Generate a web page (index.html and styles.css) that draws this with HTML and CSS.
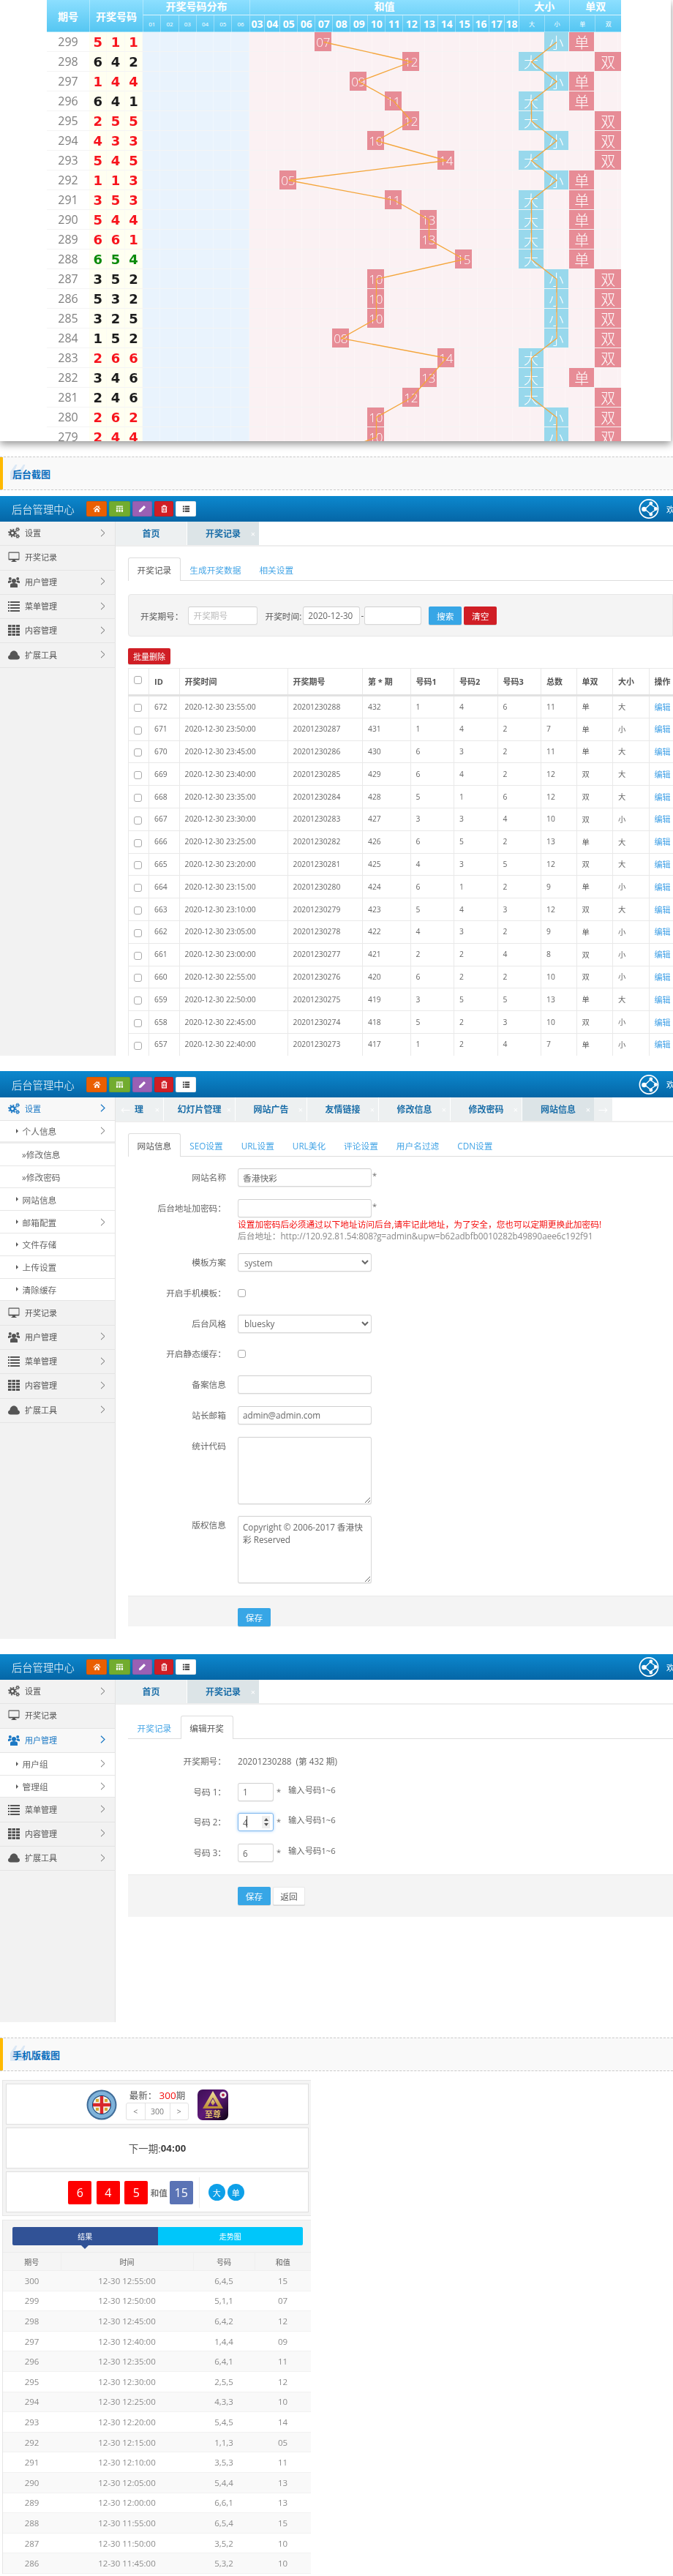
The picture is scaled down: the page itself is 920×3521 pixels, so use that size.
FILE: index.html
```html
<!DOCTYPE html>
<html lang="zh-CN">
<head>
<meta charset="utf-8">
<title>截图</title>
<link rel="stylesheet" href="styles.css">
</head>
<body>
<svg class="sprite" aria-hidden="true">
  <symbol id="i-quote" viewBox="0 0 21 21"><path fill="#dbe8f5" d="M7 0h2.500L5.500 10H9v11H0V10zM18 0h2.500l-4 10H20v11h-9V10z"/></symbol>
  <symbol id="i-gear" viewBox="0 0 16 16"><g fill="none" stroke="#555"><circle cx="6" cy="8.6" r="3" stroke-width="2.4"/><circle cx="6" cy="8.6" r="5" stroke-width="1.8" stroke-dasharray="1.9 2"/><circle cx="13" cy="3.6" r="1.5" stroke-width="1.3"/><circle cx="13" cy="3.6" r="2.5" stroke-width="1" stroke-dasharray="1.2 1.2"/><circle cx="13" cy="13" r="1.5" stroke-width="1.3"/><circle cx="13" cy="13" r="2.5" stroke-width="1" stroke-dasharray="1.2 1.2"/></g></symbol>
  <symbol id="i-gear-b" viewBox="0 0 16 16"><g fill="none" stroke="#1b78c4"><circle cx="6" cy="8.6" r="3" stroke-width="2.4"/><circle cx="6" cy="8.6" r="5" stroke-width="1.8" stroke-dasharray="1.9 2"/><circle cx="13" cy="3.6" r="1.5" stroke-width="1.3"/><circle cx="13" cy="3.6" r="2.5" stroke-width="1" stroke-dasharray="1.2 1.2"/><circle cx="13" cy="13" r="1.5" stroke-width="1.3"/><circle cx="13" cy="13" r="2.5" stroke-width="1" stroke-dasharray="1.2 1.2"/></g></symbol>
  <symbol id="i-monitor" viewBox="0 0 16 16"><path fill="#555" d="M1.5 1.5h13a1 1 0 0 1 1 1v9a1 1 0 0 1-1 1H10v1.5h1.5v1h-7v-1H6V12.500H1.500a1 1 0 0 1-1-1v-9a1 1 0 0 1 1-1zm0 1.200v8h13v-8z"/></symbol>
  <symbol id="i-users" viewBox="0 0 16 16"><g fill="#555"><circle cx="8" cy="7" r="3"/><circle cx="2.800" cy="4" r="2"/><circle cx="13.200" cy="4" r="2"/><path d="M3 16v-3.500c0-1.500 1.500-2.500 5-2.500s5 1 5 2.500V16zM0 10V8c0-1 1-1.500 2.800-1.500 1 0 1.500.2 1.900.6C4.400 8.500 4 9 3.500 9.200 2 9.500 1.200 9.800 0 10zm16 0V8c0-1-1-1.500-2.800-1.500-1 0-1.500.2-1.900.6.300 1.400.7 1.900 1.200 2.100 1.500.3 2.300.6 3.500.8z"/></g></symbol>
  <symbol id="i-users-b" viewBox="0 0 16 16"><g fill="#1b78c4"><circle cx="8" cy="7" r="3"/><circle cx="2.800" cy="4" r="2"/><circle cx="13.200" cy="4" r="2"/><path d="M3 16v-3.500c0-1.500 1.500-2.500 5-2.500s5 1 5 2.500V16zM0 10V8c0-1 1-1.500 2.800-1.500 1 0 1.500.2 1.900.6C4.400 8.500 4 9 3.500 9.200 2 9.500 1.200 9.800 0 10zm16 0V8c0-1-1-1.500-2.800-1.500-1 0-1.500.2-1.900.6.300 1.400.7 1.900 1.200 2.100 1.500.3 2.300.6 3.500.8z"/></g></symbol>
  <symbol id="i-list" viewBox="0 0 16 16"><path fill="#555" d="M0 2h2v2H0zm3 0h13v2H3zM0 6h2v2H0zm3 0h13v2H3zm-3 4h2v2H0zm3 0h13v2H3zm-3 4h2v2H0zm3 0h13v2H3z"/></symbol>
  <symbol id="i-grid" viewBox="0 0 16 16"><path fill="#555" d="M0 1h4.500v3H0zm5.500 0H10v3H5.500zm5.500 0h5v3h-5zM0 5h4.500v3H0zm5.500 0H10v3H5.500zM11 5h5v3h-5zM0 9h4.500v3H0zm5.500 0H10v3H5.500zM11 9h5v3h-5zM0 13h4.500v3H0zm5.500 0H10v3H5.500zm5.500 0h5v3h-5z"/></symbol>
  <symbol id="i-cloud" viewBox="0 0 16 16"><path fill="#555" d="M3.500 14.500C1.500 14.500 0 13.200 0 11.400 0 9.900 1 8.700 2.400 8.400 2.800 4.900 5 2.500 8 2.500s5.200 2.400 5.600 5.900c1.400.3 2.400 1.500 2.400 3 0 1.800-1.500 3.100-3.500 3.100z"/></symbol>
  <symbol id="t-home" viewBox="0 0 12 12"><path fill="#fff" d="M6 1 .5 6.200 1.300 7 6 2.600 10.700 7l.8-.8L9.500 4.300V1.500H8v1.400zM2.500 7.600V11H5V8h2v3h2.500V7.600L6 4.300z"/></symbol>
  <symbol id="t-cal" viewBox="0 0 12 12"><path fill="#fff" d="M1 1.500h10V3H1zM1 4h2.500v2H1zm3.700 0h2.600v2H4.700zm3.800 0H11v2H8.500zM1 7h2.500v3.500H1zm3.700 0h2.600v3.500H4.700zm3.800 0H11v3.500H8.500z"/></symbol>
  <symbol id="t-pen" viewBox="0 0 12 12"><path fill="#fff" d="M8.500 1 11 3.500 4 10.500 1 11l.5-3z"/></symbol>
  <symbol id="t-trash" viewBox="0 0 12 12"><path fill="none" stroke="#fff" stroke-width="1.300" d="M2.800 3h6.400v7.800H2.800zM1.800 3h8.400M4.500 3V1.300h3V3M4.800 5v4M7.200 5v4"/></symbol>
  <symbol id="t-list" viewBox="0 0 12 12"><path fill="#333" d="M1 1.500h2v2H1zm3 0h7v2H4zM1 5h2v2H1zm3 0h7v2H4zM1 8.500h2v2H1zm3 0h7v2H4z"/></symbol>
  <symbol id="i-share" viewBox="0 0 30 30"><g fill="none" stroke="#fff"><circle cx="15" cy="15" r="13.500" stroke-width="1.800"/><path stroke-width="1.500" d="M9 15.500 17 8M9 15.500 17 22M17 8 27 15M17 22 27 15"/></g><g fill="#fff"><circle cx="8" cy="15.500" r="3.500"/><circle cx="18" cy="7" r="2.600"/><circle cx="18" cy="23" r="2.600"/><circle cx="25" cy="15" r="2.600"/></g></symbol>
  <symbol id="i-chev" viewBox="0 0 7 11"><path fill="none" stroke="#666" stroke-width="1" d="M1 .8 6 5.500 1 10.200"/></symbol>
  <symbol id="i-chev-b" viewBox="0 0 7 11"><path fill="none" stroke="#1b78c4" stroke-width="1.200" d="M1 .8 6 5.500 1 10.200"/></symbol>
</svg>

<section class="trend">
  <div class="thd tgrid">
    <div class="th th-sp th-q">期号</div>
    <div class="th th-sp th-n">开奖号码</div>
    <div class="th th-t c-dist">开奖号码分布</div>
    <div class="th th-t c-hz">和值</div>
    <div class="th th-t c-dx">大小</div>
    <div class="th th-t c-ds">单双</div>
    <div class="th th-s">01</div><div class="th th-s">02</div><div class="th th-s">03</div><div class="th th-s">04</div><div class="th th-s">05</div><div class="th th-s">06</div>
    <div class="th th-b">03</div><div class="th th-b">04</div><div class="th th-b">05</div><div class="th th-b">06</div><div class="th th-b">07</div><div class="th th-b">08</div><div class="th th-b">09</div><div class="th th-b">10</div><div class="th th-b">11</div><div class="th th-b">12</div><div class="th th-b">13</div><div class="th th-b">14</div><div class="th th-b">15</div><div class="th th-b">16</div><div class="th th-b">17</div><div class="th th-b">18</div>
    <div class="th th-s">大</div><div class="th th-s">小</div><div class="th th-s">单</div><div class="th th-s">双</div>
  </div>
  <div class="tr tgrid red"><span class="qh">299</span><b class="nm">5</b><b class="nm">1</b><b class="nm">1</b><i class="dz"></i><i class="hz"></i><span class="bx v07">07</span><span class="bl xi">小</span><span class="bx da">单</span></div>
  <div class="tr tgrid blk"><span class="qh">298</span><b class="nm">6</b><b class="nm">4</b><b class="nm">2</b><i class="dz"></i><i class="hz"></i><span class="bx v12">12</span><span class="bl dd">大</span><span class="bx sh">双</span></div>
  <div class="tr tgrid red"><span class="qh">297</span><b class="nm">1</b><b class="nm">4</b><b class="nm">4</b><i class="dz"></i><i class="hz"></i><span class="bx v09">09</span><span class="bl xi">小</span><span class="bx da">单</span></div>
  <div class="tr tgrid blk"><span class="qh">296</span><b class="nm">6</b><b class="nm">4</b><b class="nm">1</b><i class="dz"></i><i class="hz"></i><span class="bx v11">11</span><span class="bl dd">大</span><span class="bx da">单</span></div>
  <div class="tr tgrid red"><span class="qh">295</span><b class="nm">2</b><b class="nm">5</b><b class="nm">5</b><i class="dz"></i><i class="hz"></i><span class="bx v12">12</span><span class="bl dd">大</span><span class="bx sh">双</span></div>
  <div class="tr tgrid red"><span class="qh">294</span><b class="nm">4</b><b class="nm">3</b><b class="nm">3</b><i class="dz"></i><i class="hz"></i><span class="bx v10">10</span><span class="bl xi">小</span><span class="bx sh">双</span></div>
  <div class="tr tgrid red"><span class="qh">293</span><b class="nm">5</b><b class="nm">4</b><b class="nm">5</b><i class="dz"></i><i class="hz"></i><span class="bx v14">14</span><span class="bl dd">大</span><span class="bx sh">双</span></div>
  <div class="tr tgrid red"><span class="qh">292</span><b class="nm">1</b><b class="nm">1</b><b class="nm">3</b><i class="dz"></i><i class="hz"></i><span class="bx v05">05</span><span class="bl xi">小</span><span class="bx da">单</span></div>
  <div class="tr tgrid red"><span class="qh">291</span><b class="nm">3</b><b class="nm">5</b><b class="nm">3</b><i class="dz"></i><i class="hz"></i><span class="bx v11">11</span><span class="bl dd">大</span><span class="bx da">单</span></div>
  <div class="tr tgrid red"><span class="qh">290</span><b class="nm">5</b><b class="nm">4</b><b class="nm">4</b><i class="dz"></i><i class="hz"></i><span class="bx v13">13</span><span class="bl dd">大</span><span class="bx da">单</span></div>
  <div class="tr tgrid red"><span class="qh">289</span><b class="nm">6</b><b class="nm">6</b><b class="nm">1</b><i class="dz"></i><i class="hz"></i><span class="bx v13">13</span><span class="bl dd">大</span><span class="bx da">单</span></div>
  <div class="tr tgrid grn"><span class="qh">288</span><b class="nm">6</b><b class="nm">5</b><b class="nm">4</b><i class="dz"></i><i class="hz"></i><span class="bx v15">15</span><span class="bl dd">大</span><span class="bx da">单</span></div>
  <div class="tr tgrid blk"><span class="qh">287</span><b class="nm">3</b><b class="nm">5</b><b class="nm">2</b><i class="dz"></i><i class="hz"></i><span class="bx v10">10</span><span class="bl xi">小</span><span class="bx sh">双</span></div>
  <div class="tr tgrid blk"><span class="qh">286</span><b class="nm">5</b><b class="nm">3</b><b class="nm">2</b><i class="dz"></i><i class="hz"></i><span class="bx v10">10</span><span class="bl xi">小</span><span class="bx sh">双</span></div>
  <div class="tr tgrid blk"><span class="qh">285</span><b class="nm">3</b><b class="nm">2</b><b class="nm">5</b><i class="dz"></i><i class="hz"></i><span class="bx v10">10</span><span class="bl xi">小</span><span class="bx sh">双</span></div>
  <div class="tr tgrid blk"><span class="qh">284</span><b class="nm">1</b><b class="nm">5</b><b class="nm">2</b><i class="dz"></i><i class="hz"></i><span class="bx v08">08</span><span class="bl xi">小</span><span class="bx sh">双</span></div>
  <div class="tr tgrid red"><span class="qh">283</span><b class="nm">2</b><b class="nm">6</b><b class="nm">6</b><i class="dz"></i><i class="hz"></i><span class="bx v14">14</span><span class="bl dd">大</span><span class="bx sh">双</span></div>
  <div class="tr tgrid blk"><span class="qh">282</span><b class="nm">3</b><b class="nm">4</b><b class="nm">6</b><i class="dz"></i><i class="hz"></i><span class="bx v13">13</span><span class="bl dd">大</span><span class="bx da">单</span></div>
  <div class="tr tgrid blk"><span class="qh">281</span><b class="nm">2</b><b class="nm">4</b><b class="nm">6</b><i class="dz"></i><i class="hz"></i><span class="bx v12">12</span><span class="bl dd">大</span><span class="bx sh">双</span></div>
  <div class="tr tgrid red"><span class="qh">280</span><b class="nm">2</b><b class="nm">6</b><b class="nm">2</b><i class="dz"></i><i class="hz"></i><span class="bx v10">10</span><span class="bl xi">小</span><span class="bx sh">双</span></div>
  <div class="tr tgrid red"><span class="qh">279</span><b class="nm">2</b><b class="nm">4</b><b class="nm">4</b><i class="dz"></i><i class="hz"></i><span class="bx v10">10</span><span class="bl xi">小</span><span class="bx sh">双</span></div>
  <svg class="tlines" viewBox="0 0 917 603" aria-hidden="true">
    <polyline points="442.500,57.500 562.500,84.500 490.500,111.500 538.500,138.500 562.500,165.500 514.500,192.500 610.500,219.500 394.500,246.500 538.500,273.500 586.500,300.500 586.500,327.500 634.500,354.500 514.500,381.500 514.500,408.500 514.500,435.500 466.500,462.500 610.500,489.500 586.500,516.500 562.500,543.500 514.500,570.500 514.500,597.500 442.500,624.500"/>
    <polyline points="761,57.500 726.500,84.500 761,111.500 726.500,138.500 726.500,165.500 761,192.500 726.500,219.500 761,246.500 726.500,273.500 726.500,300.500 726.500,327.500 726.500,354.500 761,381.500 761,408.500 761,435.500 761,462.500 726.500,489.500 726.500,516.500 726.500,543.500 761,570.500 761,603"/>
  </svg>
</section>

<h2 class="sec sec-a"><svg class="sec-q" aria-hidden="true"><use href="#i-quote"/></svg><span class="sec-t">后台截图</span></h2>

<section class="admin admin-a">
  <header class="ahead">
    <div class="atitle">后台管理中心</div>
    <div class="tools"><a class="tb tb-o"><svg class="ti"><use href="#t-home"/></svg></a><a class="tb tb-g"><svg class="ti"><use href="#t-cal"/></svg></a><a class="tb tb-p"><svg class="ti"><use href="#t-pen"/></svg></a><a class="tb tb-r"><svg class="ti"><use href="#t-trash"/></svg></a><a class="tb tb-w"><svg class="ti"><use href="#t-list"/></svg></a></div>
    <svg class="share"><use href="#i-share"/></svg><span class="hello">欢迎</span>
  </header>
  <div class="abody">
    <nav class="side">
      <a class="nav"><svg class="ni"><use href="#i-gear"/></svg><span>设置</span><svg class="chev"><use href="#i-chev"/></svg></a>
      <a class="nav"><svg class="ni"><use href="#i-monitor"/></svg><span>开奖记录</span></a>
      <a class="nav"><svg class="ni"><use href="#i-users"/></svg><span>用户管理</span><svg class="chev"><use href="#i-chev"/></svg></a>
      <a class="nav"><svg class="ni"><use href="#i-list"/></svg><span>菜单管理</span><svg class="chev"><use href="#i-chev"/></svg></a>
      <a class="nav"><svg class="ni"><use href="#i-grid"/></svg><span>内容管理</span><svg class="chev"><use href="#i-chev"/></svg></a>
      <a class="nav"><svg class="ni"><use href="#i-cloud"/></svg><span>扩展工具</span><svg class="chev"><use href="#i-chev"/></svg></a>
    </nav>
    <main class="amain">
      <div class="tabs"><a class="tab">首页</a><a class="tab tab-on">开奖记录<span class="tx">×</span></a></div>
      <div class="pane">
        <div class="stabs"><a class="stab stab-on">开奖记录</a><a class="stab">生成开奖数据</a><a class="stab">相关设置</a></div>
        <form class="search">
          <label class="sl">开奖期号：</label><input class="inp in-q" placeholder="开奖期号">
          <label class="sl sl2">开奖时间:</label><input class="inp in-d" value="2020-12-30"><span class="dash">-</span><input class="inp in-d">
          <a class="btn btn-b btn-s1">搜索</a><a class="btn btn-r">清空</a>
        </form>
        <a class="btn btn-r btn-del">批量删除</a>
        <table class="grid">
          <colgroup><col class="g1"><col class="g2"><col class="g3"><col class="g4"><col class="g5"><col class="g6"><col class="g6"><col class="g6"><col class="g7"><col class="g8"><col class="g8"><col class="g9"></colgroup>
          <thead><tr><th><input type="checkbox" class="ck ck-h"></th><th>ID</th><th>开奖时间</th><th>开奖期号</th><th>第 * 期</th><th>号码1</th><th>号码2</th><th>号码3</th><th>总数</th><th>单双</th><th>大小</th><th>操作</th></tr></thead>
          <tbody>
            <tr><td><input type="checkbox" class="ck"></td><td>672</td><td>2020-12-30 23:55:00</td><td>20201230288</td><td>432</td><td>1</td><td>4</td><td>6</td><td>11</td><td>单</td><td>大</td><td><a class="lk">编辑</a> |</td></tr>
            <tr><td><input type="checkbox" class="ck"></td><td>671</td><td>2020-12-30 23:50:00</td><td>20201230287</td><td>431</td><td>1</td><td>4</td><td>2</td><td>7</td><td>单</td><td>小</td><td><a class="lk">编辑</a> |</td></tr>
            <tr><td><input type="checkbox" class="ck"></td><td>670</td><td>2020-12-30 23:45:00</td><td>20201230286</td><td>430</td><td>6</td><td>3</td><td>2</td><td>11</td><td>单</td><td>大</td><td><a class="lk">编辑</a> |</td></tr>
            <tr><td><input type="checkbox" class="ck"></td><td>669</td><td>2020-12-30 23:40:00</td><td>20201230285</td><td>429</td><td>6</td><td>4</td><td>2</td><td>12</td><td>双</td><td>大</td><td><a class="lk">编辑</a> |</td></tr>
            <tr><td><input type="checkbox" class="ck"></td><td>668</td><td>2020-12-30 23:35:00</td><td>20201230284</td><td>428</td><td>5</td><td>1</td><td>6</td><td>12</td><td>双</td><td>大</td><td><a class="lk">编辑</a> |</td></tr>
            <tr><td><input type="checkbox" class="ck"></td><td>667</td><td>2020-12-30 23:30:00</td><td>20201230283</td><td>427</td><td>3</td><td>3</td><td>4</td><td>10</td><td>双</td><td>小</td><td><a class="lk">编辑</a> |</td></tr>
            <tr><td><input type="checkbox" class="ck"></td><td>666</td><td>2020-12-30 23:25:00</td><td>20201230282</td><td>426</td><td>6</td><td>5</td><td>2</td><td>13</td><td>单</td><td>大</td><td><a class="lk">编辑</a> |</td></tr>
            <tr><td><input type="checkbox" class="ck"></td><td>665</td><td>2020-12-30 23:20:00</td><td>20201230281</td><td>425</td><td>4</td><td>3</td><td>5</td><td>12</td><td>双</td><td>大</td><td><a class="lk">编辑</a> |</td></tr>
            <tr><td><input type="checkbox" class="ck"></td><td>664</td><td>2020-12-30 23:15:00</td><td>20201230280</td><td>424</td><td>6</td><td>1</td><td>2</td><td>9</td><td>单</td><td>小</td><td><a class="lk">编辑</a> |</td></tr>
            <tr><td><input type="checkbox" class="ck"></td><td>663</td><td>2020-12-30 23:10:00</td><td>20201230279</td><td>423</td><td>5</td><td>4</td><td>3</td><td>12</td><td>双</td><td>大</td><td><a class="lk">编辑</a> |</td></tr>
            <tr><td><input type="checkbox" class="ck"></td><td>662</td><td>2020-12-30 23:05:00</td><td>20201230278</td><td>422</td><td>4</td><td>3</td><td>2</td><td>9</td><td>单</td><td>小</td><td><a class="lk">编辑</a> |</td></tr>
            <tr><td><input type="checkbox" class="ck"></td><td>661</td><td>2020-12-30 23:00:00</td><td>20201230277</td><td>421</td><td>2</td><td>2</td><td>4</td><td>8</td><td>双</td><td>小</td><td><a class="lk">编辑</a> |</td></tr>
            <tr><td><input type="checkbox" class="ck"></td><td>660</td><td>2020-12-30 22:55:00</td><td>20201230276</td><td>420</td><td>6</td><td>2</td><td>2</td><td>10</td><td>双</td><td>小</td><td><a class="lk">编辑</a> |</td></tr>
            <tr><td><input type="checkbox" class="ck"></td><td>659</td><td>2020-12-30 22:50:00</td><td>20201230275</td><td>419</td><td>3</td><td>5</td><td>5</td><td>13</td><td>单</td><td>大</td><td><a class="lk">编辑</a> |</td></tr>
            <tr><td><input type="checkbox" class="ck"></td><td>658</td><td>2020-12-30 22:45:00</td><td>20201230274</td><td>418</td><td>5</td><td>2</td><td>3</td><td>10</td><td>双</td><td>小</td><td><a class="lk">编辑</a> |</td></tr>
            <tr><td><input type="checkbox" class="ck"></td><td>657</td><td>2020-12-30 22:40:00</td><td>20201230273</td><td>417</td><td>1</td><td>2</td><td>4</td><td>7</td><td>单</td><td>小</td><td><a class="lk">编辑</a> |</td></tr>
          </tbody>
        </table>
      </div>
    </main>
  </div>
</section>

<section class="admin admin-b">
  <header class="ahead ahead-b">
    <div class="atitle">后台管理中心</div>
    <div class="tools"><a class="tb tb-o"><svg class="ti"><use href="#t-home"/></svg></a><a class="tb tb-g"><svg class="ti"><use href="#t-cal"/></svg></a><a class="tb tb-p"><svg class="ti"><use href="#t-pen"/></svg></a><a class="tb tb-r"><svg class="ti"><use href="#t-trash"/></svg></a><a class="tb tb-w"><svg class="ti"><use href="#t-list"/></svg></a></div>
    <svg class="share"><use href="#i-share"/></svg><span class="hello">欢迎</span>
  </header>
  <div class="abody">
    <nav class="side">
      <a class="nav nav-on nav-s"><svg class="ni"><use href="#i-gear-b"/></svg><span>设置</span><svg class="chev"><use href="#i-chev-b"/></svg></a>
      <a class="sub sub-f"><i class="tri"></i><span>个人信息</span><svg class="chev"><use href="#i-chev"/></svg></a>
      <a class="sub sub-2">»修改信息</a>
      <a class="sub sub-2">»修改密码</a>
      <a class="sub"><i class="tri"></i><span>网站信息</span></a>
      <a class="sub"><i class="tri"></i><span>邮箱配置</span><svg class="chev"><use href="#i-chev"/></svg></a>
      <a class="sub"><i class="tri"></i><span>文件存储</span></a>
      <a class="sub"><i class="tri"></i><span>上传设置</span></a>
      <a class="sub"><i class="tri"></i><span>清除缓存</span></a>
      <a class="nav"><svg class="ni"><use href="#i-monitor"/></svg><span>开奖记录</span></a>
      <a class="nav"><svg class="ni"><use href="#i-users"/></svg><span>用户管理</span><svg class="chev"><use href="#i-chev"/></svg></a>
      <a class="nav"><svg class="ni"><use href="#i-list"/></svg><span>菜单管理</span><svg class="chev"><use href="#i-chev"/></svg></a>
      <a class="nav"><svg class="ni"><use href="#i-grid"/></svg><span>内容管理</span><svg class="chev"><use href="#i-chev"/></svg></a>
      <a class="nav"><svg class="ni"><use href="#i-cloud"/></svg><span>扩展工具</span><svg class="chev"><use href="#i-chev"/></svg></a>
    </nav>
    <main class="amain">
      <div class="tabs tabs-m"><a class="tab tab-clip"><span class="arr">←</span><span>理</span><span class="tx">×</span></a><a class="tab">幻灯片管理<span class="tx">×</span></a><a class="tab">网站广告<span class="tx">×</span></a><a class="tab">友情链接<span class="tx">×</span></a><a class="tab">修改信息<span class="tx">×</span></a><a class="tab">修改密码<span class="tx">×</span></a><a class="tab tab-on">网站信息<span class="tx">×</span></a><a class="tab tab-arr"><span class="arr">→</span></a></div>
      <div class="pane">
        <div class="stabs"><a class="stab stab-on">网站信息</a><a class="stab">SEO设置</a><a class="stab">URL设置</a><a class="stab">URL美化</a><a class="stab">评论设置</a><a class="stab">用户名过滤</a><a class="stab">CDN设置</a></div>
        <form class="form">
          <div class="frow"><label class="fl">网站名称</label><input class="inp fi" value="香港快彩"><span class="star">*</span></div>
          <div class="frow frow-n"><label class="fl">后台地址加密码：</label><div class="fcol"><div class="fline"><input class="inp fi"><span class="star">*</span></div><p class="warn">设置加密码后必须通过以下地址访问后台,请牢记此地址，为了安全，您也可以定期更换此加密码!</p><p class="addr">后台地址：http://120.92.81.54:808?g=admin&amp;upw=b62adbfb0010282b49890aee6c192f91</p></div></div>
          <div class="frow"><label class="fl">模板方案</label><select class="inp fi fs"><option>system</option></select></div>
          <div class="frow"><label class="fl">开启手机模板：</label><input type="checkbox" class="ck ck-f"></div>
          <div class="frow"><label class="fl">后台风格</label><select class="inp fi fs"><option>bluesky</option></select></div>
          <div class="frow"><label class="fl">开启静态缓存：</label><input type="checkbox" class="ck ck-f"></div>
          <div class="frow"><label class="fl">备案信息</label><input class="inp fi"></div>
          <div class="frow"><label class="fl">站长邮箱</label><input class="inp fi" value="admin@admin.com"></div>
          <div class="frow frow-t"><label class="fl">统计代码</label><textarea class="inp fi ft"></textarea></div>
          <div class="frow frow-t"><label class="fl">版权信息</label><textarea class="inp fi ft">Copyright © 2006-2017 香港快彩 Reserved</textarea></div>
        </form>
        <div class="fbar fbar-b"><a class="btn btn-b btn-save">保存</a></div>
      </div>
    </main>
  </div>
</section>

<section class="admin admin-c">
  <header class="ahead">
    <div class="atitle">后台管理中心</div>
    <div class="tools"><a class="tb tb-o"><svg class="ti"><use href="#t-home"/></svg></a><a class="tb tb-g"><svg class="ti"><use href="#t-cal"/></svg></a><a class="tb tb-p"><svg class="ti"><use href="#t-pen"/></svg></a><a class="tb tb-r"><svg class="ti"><use href="#t-trash"/></svg></a><a class="tb tb-w"><svg class="ti"><use href="#t-list"/></svg></a></div>
    <svg class="share"><use href="#i-share"/></svg><span class="hello">欢迎</span>
  </header>
  <div class="abody">
    <nav class="side">
      <a class="nav"><svg class="ni"><use href="#i-gear"/></svg><span>设置</span><svg class="chev"><use href="#i-chev"/></svg></a>
      <a class="nav"><svg class="ni"><use href="#i-monitor"/></svg><span>开奖记录</span></a>
      <a class="nav nav-on"><svg class="ni"><use href="#i-users-b"/></svg><span>用户管理</span><svg class="chev"><use href="#i-chev-b"/></svg></a>
      <a class="sub"><i class="tri"></i><span>用户组</span><svg class="chev"><use href="#i-chev"/></svg></a>
      <a class="sub"><i class="tri"></i><span>管理组</span><svg class="chev"><use href="#i-chev"/></svg></a>
      <a class="nav"><svg class="ni"><use href="#i-list"/></svg><span>菜单管理</span><svg class="chev"><use href="#i-chev"/></svg></a>
      <a class="nav"><svg class="ni"><use href="#i-grid"/></svg><span>内容管理</span><svg class="chev"><use href="#i-chev"/></svg></a>
      <a class="nav"><svg class="ni"><use href="#i-cloud"/></svg><span>扩展工具</span><svg class="chev"><use href="#i-chev"/></svg></a>
    </nav>
    <main class="amain">
      <div class="tabs"><a class="tab">首页</a><a class="tab tab-on">开奖记录<span class="tx">×</span></a></div>
      <div class="pane">
        <div class="stabs"><a class="stab">开奖记录</a><a class="stab stab-on">编辑开奖</a></div>
        <form class="form form-c">
          <div class="frow"><label class="fl fl-c">开奖期号：</label><span class="fval">20201230288&nbsp; (第 432 期)</span></div>
          <div class="frow"><label class="fl fl-c">号码 1：</label><input class="inp fn" value="1"><span class="star">*</span><span class="hint">输入号码1~6</span></div>
          <div class="frow"><label class="fl fl-c">号码 2：</label><span class="numw"><input class="inp fn fn-on" value="4"><i class="caret"></i><i class="spin"></i></span><span class="star">*</span><span class="hint">输入号码1~6</span></div>
          <div class="frow"><label class="fl fl-c">号码 3：</label><input class="inp fn" value="6"><span class="star">*</span><span class="hint">输入号码1~6</span></div>
        </form>
        <div class="fbar fbar-c"><a class="btn btn-b btn-save">保存</a><a class="btn btn-w">返回</a></div>
      </div>
    </main>
  </div>
</section>

<h2 class="sec sec-b"><svg class="sec-q" aria-hidden="true"><use href="#i-quote"/></svg><span class="sec-t">手机版截图</span></h2>

<section class="mob">
  <div class="mbox">
    <div class="mcell mc1">
      <svg class="mlogo" viewBox="0 0 42 42" aria-hidden="true"><circle cx="21" cy="21" r="20.500" fill="#3f6c98"/><circle cx="21" cy="21" r="18.500" fill="#7fb2d9"/><circle cx="21" cy="21" r="13" fill="#123f70"/><circle cx="21" cy="21" r="12" fill="#f3f1e6"/><path fill="#d8262c" d="M18.800 9h4.400v9.800H33v4.400h-9.800V33h-4.400v-9.800H9v-4.400h9.800z"/><path fill="#d9a82e" d="M13 13h4v4h-4zm12 0h4v4h-4zM13 25h4v4h-4zm12 0h4v4h-4z"/></svg>
      <div class="mmid">
        <div class="mnew">最新： <em>300</em>期</div>
        <div class="pager"><a>&lt;</a><a class="pg">300</a><a>&gt;</a></div>
      </div>
      <svg class="mapp" viewBox="0 0 42 42" aria-hidden="true"><defs><linearGradient id="appg" x1="0" y1="0" x2="1" y2="1"><stop offset="0" stop-color="#3d0f55"/><stop offset=".5" stop-color="#5e1a78"/><stop offset="1" stop-color="#0b0310"/></linearGradient><linearGradient id="appy" x1="0" y1="0" x2="0" y2="1"><stop offset="0" stop-color="#f6e3a0"/><stop offset="1" stop-color="#b98a32"/></linearGradient></defs><rect width="42" height="42" rx="7" fill="url(#appg)"/><path fill="url(#appy)" d="M21 2 35 26H7zm0 9L14 23h14z"/><path fill="url(#appy)" d="M21 13l3 5-3 4-3-4z"/><circle cx="35" cy="7.500" r="4.500" fill="#eee"/><circle cx="35" cy="7.500" r="2" fill="#b5284a"/><text class="mapp-t" x="21" y="38">至尊</text></svg>
    </div>
    <div class="mcell mc2">下一期:<b>04:00</b></div>
    <div class="mcell mc3">
      <span class="ball">6</span><span class="ball">4</span><span class="ball">5</span>
      <span class="mhz">和值</span><span class="ball ball-s">15</span><i class="mdiv"></i>
      <span class="circ">大</span><span class="circ">单</span>
    </div>
  </div>
  <div class="mbox2">
    <div class="seg"><a class="seg-a">结果</a><a class="seg-b">走势图</a></div>
    <table class="mt">
      <colgroup><col class="m1"><col class="m2"><col class="m3"><col class="m4"></colgroup>
      <thead><tr><th>期号</th><th>时间</th><th>号码</th><th>和值</th></tr></thead>
      <tbody>
        <tr><td>300</td><td>12-30 12:55:00</td><td>6,4,5</td><td>15</td></tr>
        <tr><td>299</td><td>12-30 12:50:00</td><td>5,1,1</td><td>07</td></tr>
        <tr><td>298</td><td>12-30 12:45:00</td><td>6,4,2</td><td>12</td></tr>
        <tr><td>297</td><td>12-30 12:40:00</td><td>1,4,4</td><td>09</td></tr>
        <tr><td>296</td><td>12-30 12:35:00</td><td>6,4,1</td><td>11</td></tr>
        <tr><td>295</td><td>12-30 12:30:00</td><td>2,5,5</td><td>12</td></tr>
        <tr><td>294</td><td>12-30 12:25:00</td><td>4,3,3</td><td>10</td></tr>
        <tr><td>293</td><td>12-30 12:20:00</td><td>5,4,5</td><td>14</td></tr>
        <tr><td>292</td><td>12-30 12:15:00</td><td>1,1,3</td><td>05</td></tr>
        <tr><td>291</td><td>12-30 12:10:00</td><td>3,5,3</td><td>11</td></tr>
        <tr><td>290</td><td>12-30 12:05:00</td><td>5,4,4</td><td>13</td></tr>
        <tr><td>289</td><td>12-30 12:00:00</td><td>6,6,1</td><td>13</td></tr>
        <tr><td>288</td><td>12-30 11:55:00</td><td>6,5,4</td><td>15</td></tr>
        <tr><td>287</td><td>12-30 11:50:00</td><td>3,5,2</td><td>10</td></tr>
        <tr><td>286</td><td>12-30 11:45:00</td><td>5,3,2</td><td>10</td></tr>
      </tbody>
    </table>
  </div>
</section>
</body>
</html>
```

FILE: styles.css
```css
* { box-sizing: border-box; }
html, body { margin: 0; padding: 0; background: #fff; }
body {
  width: 920px;
  height: 3521px;
  overflow: hidden;
  font-family: "Open Sans", "Noto Sans CJK SC", sans-serif;
  font-size: 11.7px;
  color: #555;
}
.sprite { position: absolute; width: 0; height: 0; }
a { text-decoration: none; color: inherit; }
i, em { font-style: normal; }

/* the reference is made of upscaled screenshots, so everything is a little soft */
.trend, .admin, .mob { filter: blur(.35px); }

/* ---------- trend chart ---------- */
.trend {
  position: relative;
  width: 917px;
  height: 603px;
  margin-bottom: 21px;
  padding-left: 64px;
  overflow: hidden;
  background: #fff;
  box-shadow: 0 4px 10px rgba(0, 0, 0, .42);
}
.tgrid {
  display: grid;
  width: 785px;
  grid-template-columns:
    58px 24.4px 24.4px 24.4px
    24.25px 24.25px 24.25px 24.25px 24.25px 24.25px
    20.7px 21px 24px 24px 24px 24px 24px 24px 24px 24px 24px 24px 24px 21.5px 21px 20.5px
    34.5px 34.5px 35px 35.6px;
}
.thd {
  height: 44px;
  grid-template-rows: 21px 23px;
  background: linear-gradient(#8cdfff, #55c6f2);
  border-bottom: 1px solid #9fe0f7;
  color: #fff;
}
.th {
  display: flex;
  align-items: center;
  justify-content: center;
  border-left: 1px solid rgba(255, 255, 255, .35);
  font-weight: 700;
  white-space: nowrap;
  overflow: hidden;
}
.th-sp { grid-row: 1 / 3; font-size: 14px; font-weight: 700; }
.th-q { grid-column: 1; border-left: 0; }
.th-n { grid-column: 2 / 5; }
.th-t { font-size: 14px; border-bottom: 1px solid rgba(255, 255, 255, .75); padding-bottom: 5px; }
.c-dist { grid-column: 5 / 11; }
.c-hz { grid-column: 11 / 27; }
.c-dx { grid-column: 27 / 29; }
.c-ds { grid-column: 29 / 31; }
.th-s { font-size: 8px; font-weight: 400; }
.th-b { font-size: 14px; }

.tr { height: 27px; border-bottom: 1px solid #f4f4f4; }
.tr > * { grid-row: 1; }
.qh {
  grid-column: 1;
  align-self: center;
  text-align: center;
  font-size: 16px;
  color: #808080;
}
.nm {
  display: flex;
  align-items: center;
  justify-content: center;
  background: #fffff1;
  border-right: 1px solid #fbfbf4;
  font-family: "DejaVu Sans", sans-serif;
  font-size: 18px;
}
.red .nm { color: #f7141d; }
.blk .nm { color: #1c1c1c; }
.grn .nm { color: #0b8a0b; }
.dz {
  grid-column: 5 / 11;
  background: repeating-linear-gradient(90deg, #e9f3fd 0 23.25px, #f0f6fd 23.25px 24.25px);
}
.hz {
  grid-column: 11 / 31;
  background: repeating-linear-gradient(90deg, #fbf1f3 0 23px, #fdf5f6 23px 24px);
}
.bx, .bl {
  display: flex;
  align-items: center;
  justify-content: center;
  margin-right: 1px;
  color: #fff;
  font-weight: 300;
  overflow: hidden;
}
.bx { background: #e78c96; font-size: 17px; }
.bl { background: #98d8ec; font-size: 20px; }
.da, .sh, .dd, .xi { font-size: 20px; }
.v05 { grid-column: 13; }
.v07 { grid-column: 15; }
.v08 { grid-column: 16; }
.v09 { grid-column: 17; }
.v10 { grid-column: 18; }
.v11 { grid-column: 19; }
.v12 { grid-column: 20; }
.v13 { grid-column: 21; }
.v14 { grid-column: 22; }
.v15 { grid-column: 23; }
.dd { grid-column: 27; }
.xi { grid-column: 28; }
.da { grid-column: 29; }
.sh { grid-column: 30; margin-right: 0; }
.tlines { position: absolute; left: 0; top: 0; width: 917px; height: 603px; pointer-events: none; }
.tlines polyline { fill: none; stroke: #f4a53a; stroke-width: 1.3; }

/* ---------- section banner ---------- */
.sec {
  position: relative;
  display: flex;
  align-items: center;
  height: 46px;
  margin: 0;
  padding-left: 17px;
  background: #f9f9f9;
  border-top: 1px dashed #c9c9c9;
  border-bottom: 1px dashed #c9c9c9;
  color: #0a6ebd;
  font-size: 13px;
  font-weight: 700;
  overflow: hidden;
}
.sec::before {
  content: "";
  position: absolute;
  left: 0;
  top: -1px;
  bottom: -1px;
  width: 4px;
  background: #ffb900;
}
.sec-q {
  position: absolute;
  left: 14px;
  top: 10px;
  width: 21px;
  height: 21px;
}
.sec-t { position: relative; }
.sec-a { margin-bottom: 8px; }
.sec-b { margin-bottom: 12px; }

/* ---------- admin shell ---------- */
.admin { margin-bottom: 21px; overflow: hidden; }
.admin-a { height: 765px; }
.admin-b { height: 776px; }
.admin-c { height: 503px; }
.ahead {
  display: flex;
  align-items: center;
  height: 35px;
  padding-left: 16px;
  background: linear-gradient(#0c88ce, #0566a6);
  color: #fff;
  overflow: hidden;
}
.ahead-b { height: 36px; }
.atitle { width: 86px; font-size: 14.300px; font-weight: 300; white-space: nowrap; }
.tools { display: flex; gap: 3px; margin-left: 16px; }
.tb {
  display: flex;
  align-items: center;
  justify-content: center;
  height: 21px;
  width: 28px;
  border-radius: 2px;
  border: 1px solid rgba(0, 0, 0, .08);
}
.tb-o { background: #ea5f00; }
.tb-g { background: #72ac2f; width: 29px; }
.tb-p { background: #9a60b4; width: 27px; }
.tb-r { background: #d01e25; width: 26px; }
.tb-w { background: #fff; }
.ti { width: 11px; height: 11px; }
.share { width: 28px; height: 29px; margin-left: auto; margin-right: 10px; flex: none; }
.hello { width: 9px; flex: none; overflow: hidden; font-size: 11px; white-space: nowrap; }
.abody { display: flex; height: 100%; }

/* ---------- sidebar ---------- */
.side {
  flex: none;
  width: 158px;
  background: #f2f2f2;
  border-right: 1px solid #e3e3e3;
}
.nav, .sub {
  display: flex;
  align-items: center;
  white-space: nowrap;
}
.nav {
  height: 33.300px;
  padding: 0 0 2px 11px;
  border-bottom: 1px solid #e4e4e4;
  font-size: 11px;
  color: #555;
}
.nav-on { background: #f8f8f8; color: #1b78c4; }
.nav-s { height: 32px; }
.ni { flex: none; width: 16px; height: 16px; margin-right: 7px; }
.chev { flex: none; width: 7px; height: 11px; margin-left: auto; margin-right: 13px; }
.sub {
  height: 30.800px;
  padding-left: 22px;
  background: #fff;
  border-bottom: 1px solid #e6e6e6;
  color: #666;
  font-size: 11.700px;
}
.sub-f { border-bottom: 3px solid #ececec; }
.sub-2 { padding-left: 30px; }
.tri {
  flex: none;
  width: 0;
  height: 0;
  margin-right: 5.500px;
  border-left: 3px solid #555;
  border-top: 3px solid transparent;
  border-bottom: 3px solid transparent;
}

/* ---------- tabs ---------- */
.amain { flex: 1; min-width: 0; overflow: hidden; background: #fff; }
.tabs {
  display: flex;
  box-sizing: content-box;
  height: 32px;
  border-bottom: 2px solid #eeeeee;
}
.tab {
  position: relative;
  display: flex;
  align-items: center;
  justify-content: center;
  width: 98px;
  background: #edf0f1;
  border-right: 1px solid #fff;
  color: #1b6ea8;
  font-size: 12px;
  font-weight: 700;
  white-space: nowrap;
}
.tab-on { background: #dce4e7; border-right: 0; }
.tx { position: absolute; right: 5px; top: 9px; color: #fff; font-size: 11px; font-weight: 400; }
.tab-clip { width: 66px; justify-content: flex-start; padding-left: 7px; gap: 6px; overflow: hidden; }
.tab-arr { width: 26px; }
.arr { color: #fff; font-size: 13px; font-weight: 400; }
.pane { padding: 15px 0 0 17px; }
.stabs {
  display: flex;
  height: 32px;
  width: 745px;
  border-bottom: 1px solid #ddd;
  font-size: 11.700px;
}
.stab {
  display: flex;
  align-items: center;
  height: 32px;
  padding: 0 11.500px;
  margin-right: 0;
  border: 1px solid transparent;
  border-bottom: 0;
  color: #45a5e6;
  white-space: nowrap;
}
.stab-on {
  background: #fff;
  border-color: #ddd;
  border-radius: 3px 3px 0 0;
  color: #555;
  height: 32px;
}

/* ---------- search + table ---------- */
.inp {
  height: 25px;
  padding: 0 6px;
  border: 1px solid #d8d8d8;
  border-top-color: #cfcfcf;
  border-radius: 3px;
  background: #fff;
  box-shadow: 0 1px 0 #eee;
  color: #666;
  font-family: "Open Sans", "Noto Sans CJK SC", sans-serif;
  font-size: 11.700px;
  outline: 0;
}
.inp::placeholder { color: #bbb; }
.search {
  display: flex;
  align-items: center;
  height: 58px;
  width: 745px;
  margin-top: 18px;
  padding-left: 16px;
  background: #f4f4f4;
  border: 1px solid #e6e6e6;
  border-radius: 4px 0 0 4px;
  white-space: nowrap;
}
.in-q { width: 95px; margin: 0 10px 0 7px; }
.sl2 { margin-right: 2px; }
.in-d { width: 78px; }
.dash { width: 6px; text-align: center; }
.btn {
  display: inline-flex;
  align-items: center;
  justify-content: center;
  height: 25px;
  width: 45px;
  border-radius: 2px;
  color: #fff;
  font-size: 11.700px;
  box-shadow: 0 1px 0 rgba(0, 0, 0, .12);
}
.btn-b { background: #37a6e6; }
.btn-r { background: #d01e25; }
.btn-w { background: #fff; color: #555; border: 1px solid #e8e8e8; margin-left: 3px; width: 44px; }
.btn-s1 { margin: 0 3px 0 10px; }
.btn-del { width: 58px; height: 22px; margin-top: 16px; font-size: 11px; vertical-align: top; }
.grid {
  display: table;
  table-layout: fixed;
  width: 790px;
  margin-top: 5px;
  border-collapse: collapse;
  border: 1px solid #e6e6e6;
  font-size: 10.300px;
  color: #666;
}
.g1 { width: 28px; }
.g2 { width: 41.500px; }
.g3 { width: 148px; }
.g4 { width: 102.500px; }
.g5 { width: 65.500px; }
.g6 { width: 59.500px; }
.g7 { width: 48.500px; }
.g8 { width: 49.500px; }
.g9 { width: 78px; }
.grid th, .grid td {
  border: 1px solid #e9e9e9;
  padding: 0 0 0 7px;
  text-align: left;
  white-space: nowrap;
  overflow: hidden;
}
.grid th { height: 37px; border-bottom: 3px solid #e2e2e2; color: #555; font-size: 11px; font-weight: 700; padding-bottom: 1px; }
.grid td { height: 30.800px; padding-bottom: 1px; }
.lk { color: #3d9fe6; font-size: 11px; }
.ck {
  display: block;
  appearance: none;
  width: 11px;
  height: 11px;
  margin: 4px 0 0;
  border: 1px solid #aaa;
  border-radius: 3px;
  background: #fff;
}
.ck-h { margin-top: -3px; }
.ck-f { margin-top: 0; }

/* ---------- forms ---------- */
.form { padding-top: 16px; }
.frow { display: flex; align-items: center; margin-bottom: 16.700px; min-height: 25px; }
.frow-n { align-items: flex-start; }
.frow-t { align-items: flex-start; }
.fl { flex: none; width: 134px; margin-right: 16px; line-height: 25px; text-align: right; white-space: nowrap; color: #666; }
.fi { flex: none; width: 183px; }
.fs { padding: 0 4px; }
.ft { display: block; height: 92px; padding: 6px; line-height: 17px; resize: vertical; }
.fline { display: flex; align-items: center; }
.fcol { min-width: 0; }
.star { align-self: flex-start; margin: 3px 0 0 1px; color: #666; font-size: 11px; line-height: 14px; }
.warn, .addr { margin: 0; white-space: nowrap; line-height: 16px; }
.warn { margin-top: 1px; color: #f40d0d; }
.addr { color: #888; }
.fval { color: #666; }
.form-c { padding-top: 18px; }
.fl-c { width: 134px; }
.fn { width: 49px; }
.numw { position: relative; display: block; width: 49px; height: 25px; }
.fn-on { border-color: #7cb6ee; box-shadow: 0 0 4px #a9d2fb; }
.caret { position: absolute; left: 12px; top: 4px; width: 1px; height: 16px; background: #444; }
.spin {
  position: absolute;
  right: 5px;
  top: 4px;
  width: 11px;
  height: 17px;
  background: #efefef;
}
.spin::before, .spin::after {
  content: "";
  position: absolute;
  left: 2.500px;
  border-left: 3px solid transparent;
  border-right: 3px solid transparent;
}
.spin::before { top: 3px; border-bottom: 4px solid #555; }
.spin::after { bottom: 3px; border-top: 4px solid #555; }
.hint { margin-left: 10px; color: #666; font-size: 11.300px; }
.form-c .frow { align-items: flex-start; }
.form-c .star { margin-left: 4px; margin-top: 5px; }
.form-c .hint { line-height: 20px; }
.form-c .fval { line-height: 25px; }
.fbar { width: 745px; padding: 16px 0 0 150px; background: #f4f4f4; border-top: 1px solid #eaeaea; }
.fbar-b { height: 42px; margin-top: 16px; }
.fbar-c { height: 58px; margin-top: 17px; }

/* ---------- mobile ---------- */
.mob { width: 422px; margin-left: 3px; color: #666; }
.mbox {
  height: 186px;
  padding: 4px 3px 4px 4px;
  background: #f4f4f4;
  border: 1px solid #e6e6e6;
  border-right: 0;
}
.mcell {
  display: flex;
  align-items: center;
  justify-content: center;
  height: 56px;
  margin-bottom: 4px;
  background: #fff;
  border: 1px solid #dfdfdf;
}
.mc1 { gap: 12px; padding-top: 1px; }
.mlogo, .mapp { width: 42px; height: 42px; flex: none; }
.mapp-t { fill: #e6c46a; font-family: "Noto Sans CJK SC", sans-serif; font-size: 11px; font-weight: 700; text-anchor: middle; }
.mmid { width: 86px; }
.mnew { text-align: center; font-size: 12.500px; line-height: 19px; white-space: nowrap; color: #555; }
.mnew em { color: #f40d0d; font-size: 13.500px; }
.pager {
  display: flex;
  height: 24px;
  border: 1px solid #e2e2e2;
  border-radius: 3px;
  font-size: 10.500px;
  color: #777;
}
.pager a { flex: 1; display: flex; align-items: center; justify-content: center; }
.pager .pg { flex: none; width: 35px; border-left: 1px solid #e2e2e2; border-right: 1px solid #e2e2e2; }
.mc2 { font-size: 13.500px; color: #555; }
.mc2 b { font-family: "Liberation Sans", sans-serif; font-size: 13.500px; color: #333; }
.mc3 { padding-top: 1px; }
.ball {
  display: flex;
  align-items: center;
  justify-content: center;
  width: 32px;
  height: 32px;
  margin-right: 6.500px;
  border-radius: 2px;
  background: #fe0000;
  color: #fff;
  font-size: 16px;
}
.mhz { margin: 0 3px 0 -3px; font-size: 11.500px; font-weight: 700; color: #777; white-space: nowrap; }
.ball-s { margin-right: 0; background: #5a73b5; }
.mdiv { width: 1px; height: 42px; margin: 0 12px 0 8px; background: #eee; }
.circ {
  display: flex;
  align-items: center;
  justify-content: center;
  width: 23px;
  height: 23px;
  margin-right: 3px;
  border-radius: 50%;
  background: #0ea0e8;
  color: #fff;
  font-size: 11px;
}
.mbox2 { margin-top: 5px; padding-top: 9px; background: #f4f4f4; border-top: 1px solid #e8e8e8; border-left: 1px solid #e6e6e6; }
.seg { display: flex; width: 397px; height: 25px; margin: 0 0 9px 13px; font-size: 10px; color: #fff; border-radius: 2px; }
.seg a { flex: 1; display: flex; align-items: center; justify-content: center; }
.seg-a { position: relative; background: #315296; border-radius: 2px 0 0 2px; }
.seg-a::after {
  content: "";
  position: absolute;
  left: 50%;
  top: 100%;
  margin-left: -5px;
  border-left: 5px solid transparent;
  border-right: 5px solid transparent;
  border-top: 5px solid #315296;
}
.seg-b { background: #00c6fa; border-radius: 0 2px 2px 0; }
.mt {
  table-layout: fixed;
  width: 421px;
  border-collapse: collapse;
  background: #fff;
  font-size: 11.500px;
  color: #8b8b8b;
  text-align: center;
}
.m1 { width: 79px; }
.m2 { width: 181px; }
.m3 { width: 84px; }
.m4 { width: 77px; }
.mt th { height: 25px; padding: 0; background: #f5f5f5; border-top: 1px solid #ececec; border-right: 1px solid #efefef; border-bottom: 1px solid #efefef; font-size: 10px; font-weight: 500; color: #777; }
.mt th:last-child { border-right: 0; }
.mt td { height: 27.600px; padding: 0; border-bottom: 1px solid #f1f1f1; }
.mt tbody tr:nth-child(odd) { background: #f9f9f9; }
```
